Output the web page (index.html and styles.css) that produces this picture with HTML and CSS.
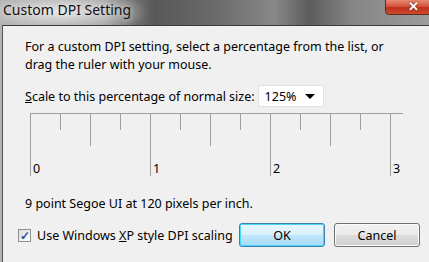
FILE: index.html
```html
<!DOCTYPE html>
<html lang="en">
  <head>
    <meta charset="UTF-8" />
    <meta name="viewport" content="width=device-width, initial-scale=1.0" />
    <title>Custom DPI Setting</title>
    <link rel="stylesheet" href="styles.css">
  </head>
  <body>
    <div class="window">
      <div class="titlebar">
        <span class="title">Custom DPI Setting</span>
        <button class="close-btn">&#10005;</button>
      </div>

      <div class="client">
        <p class="intro">
          For a custom DPI setting, select a percentage from the list, or<br />
          drag the ruler with your mouse.
        </p>

        <div class="scale-row">
          <span><u>S</u>cale to this percentage of normal size:</span>
          <div class="dropdown">
            <span>125%</span>
            <span class="arrow"></span>
          </div>
        </div>

        <svg class="ruler" width="400" height="64" viewBox="0 0 400 64">
          <g stroke="#a0a0a0" stroke-width="1">
            <line x1="27" y1="0.5" x2="400" y2="0.5" />
            <line x1="27.5" y1="0" x2="27.5" y2="63" />
            <line x1="57.5" y1="0" x2="57.5" y2="17" />
            <line x1="87.5" y1="0" x2="87.5" y2="33" />
            <line x1="117.5" y1="0" x2="117.5" y2="17" />
            <line x1="147.5" y1="0" x2="147.5" y2="63" />
            <line x1="177.5" y1="0" x2="177.5" y2="17" />
            <line x1="207.5" y1="0" x2="207.5" y2="33" />
            <line x1="237.5" y1="0" x2="237.5" y2="17" />
            <line x1="267.5" y1="0" x2="267.5" y2="63" />
            <line x1="297.5" y1="0" x2="297.5" y2="17" />
            <line x1="327.5" y1="0" x2="327.5" y2="33" />
            <line x1="357.5" y1="0" x2="357.5" y2="17" />
            <line x1="387.5" y1="0" x2="387.5" y2="63" />
          </g>
          <g class="ruler-num">
            <text x="30" y="60">0</text>
            <text x="150" y="60">1</text>
            <text x="270" y="60">2</text>
            <text x="390" y="60">3</text>
          </g>
        </svg>

        <p class="info">9 point Segoe UI at 120 pixels per inch.</p>

        <div class="bottom-row">
          <label class="check">
            <span class="checkbox">&#10003;</span>
            <span>Use Windows <u>X</u>P style DPI scaling</span>
          </label>
          <button class="btn ok-btn">OK</button>
          <button class="btn">Cancel</button>
        </div>
      </div>
    </div>
  </body>
</html>
```

FILE: styles.css
```css
body {
  margin: 0;
  font-family: "Noto Sans", "Open Sans", sans-serif;
  background-color: #9a9a9a;
  color: black;
  overflow: hidden;
}
.window {
  width: 429px;
  height: 262px;
  display: flex;
  flex-direction: column;
  background: linear-gradient(90deg, #b4b4b4 0, #a8a8a8 100%);
}
.titlebar {
  height: 25px;
  display: flex;
  justify-content: space-between;
  align-items: flex-start;
  background:
    radial-gradient(ellipse 90px 22px at 60px 12px, rgba(235, 235, 235, 0.9), rgba(235, 235, 235, 0) 100%),
    linear-gradient(90deg, #a8a8a8 0, #9c9c9c 24%, #585858 36%, #6a6a6a 50%, #888888 64%, #5c5c5c 72%, #858585 82%, #9c9c9c 100%);
}
.title {
  font-size: 14px;
  padding-left: 3px;
  line-height: 20px;
  color: #111;
  text-shadow: 0 0 6px rgba(255, 255, 255, 0.9);
}
.close-btn {
  width: 48px;
  height: 16px;
  margin-top: -1px;
  margin-right: -4px;
  padding: 0 0 0 8px;
  border: 1px solid #5b2a22;
  border-radius: 0 0 0 4px;
  background: linear-gradient(180deg, #e88a74 0, #d4533c 45%, #c0301b 55%, #cf4a30 100%);
  color: white;
  font-size: 13px;
  font-weight: bold;
  line-height: 12px;
  text-shadow: 0 0 2px #4a1a10;
}
.client {
  flex: 1;
  margin-left: 2px;
  border-top: 1px solid #3a3a3a;
  border-left: 1px solid #555;
  background-color: #f0f0f0;
  padding: 12px 0 0 22px;
  font-size: 12.5px;
}
.intro {
  margin: 0;
  line-height: 18px;
}
.scale-row {
  display: flex;
  align-items: center;
  gap: 3px;
  margin-top: 11px;
}
.dropdown {
  width: 66px;
  height: 22px;
  display: flex;
  justify-content: space-between;
  align-items: center;
  padding: 0 6px;
  box-sizing: border-box;
  background-color: white;
  border: 1px solid #e2e2e2;
}
.arrow {
  width: 0;
  height: 0;
  border-left: 5px solid transparent;
  border-right: 5px solid transparent;
  border-top: 5px solid black;
  margin-right: 2px;
}
.ruler {
  display: block;
  margin-top: 6px;
  margin-left: -22px;
}
.ruler-num {
  font-size: 12.5px;
  fill: black;
}
.info {
  margin: 18px 0 0 0;
  line-height: 18px;
}
.bottom-row {
  display: flex;
  align-items: center;
  margin-top: 10px;
  margin-left: -7px;
}
.check {
  display: flex;
  align-items: center;
  gap: 6px;
  width: 221px;
}
.checkbox {
  width: 11px;
  height: 11px;
  border: 1px solid #8e8f8f;
  background: linear-gradient(135deg, #dcdcdc 0, #ffffff 100%);
  color: #2c4e9c;
  font-size: 12px;
  font-weight: bold;
  line-height: 11px;
  text-align: center;
}
.btn {
  width: 86px;
  height: 24px;
  margin-right: 9px;
  font-family: "Noto Sans", "Open Sans", sans-serif;
  font-size: 12.5px;
  border: 1px solid #707070;
  border-radius: 3px;
  background: linear-gradient(180deg, #f2f2f2 0, #ebebeb 48%, #dddddd 52%, #cfcfcf 100%);
  box-shadow: inset 0 0 0 1px #fbfbfb;
}
.ok-btn {
  border-color: #3c7fb1;
  background: linear-gradient(180deg, #eaf6fd 0, #d9f0fc 48%, #bee6fd 52%, #a7d9f5 100%);
  box-shadow: inset 0 0 0 1px #48d8fb;
}
```
